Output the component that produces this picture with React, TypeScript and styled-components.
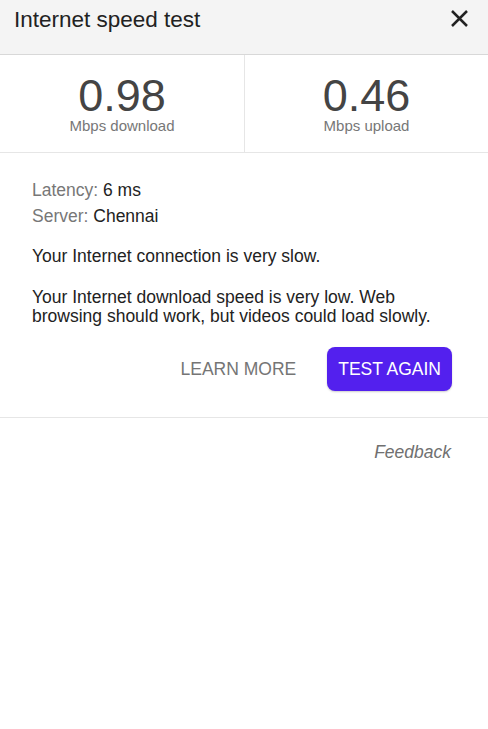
import React from "react";
import styled, { createGlobalStyle } from "styled-components";

const GlobalStyle = createGlobalStyle`
  html, body {
    margin: 0;
    padding: 0;
    background: #fff;
    font-family: "Liberation Sans", Arial, sans-serif;
  }
`;

const Panel = styled.div`
  width: 488px;
  min-height: 729px;
  background: #fff;
`;

const Header = styled.div`
  display: flex;
  align-items: flex-start;
  justify-content: space-between;
  height: 55px;
  padding: 0 19px 0 14px;
  background: #f4f4f4;
  border-bottom: 1px solid #d8d8d8;
  box-sizing: border-box;
`;

const Title = styled.h1`
  margin: 0;
  padding-top: 7px;
  font-size: 22.5px;
  font-weight: normal;
  color: #222;
  line-height: 26px;
`;

const CloseButton = styled.button`
  border: none;
  background: none;
  padding: 0;
  margin-top: 9px;
  width: 19px;
  height: 19px;
  cursor: pointer;
`;

const Stats = styled.div`
  display: grid;
  grid-template-columns: 245px 1fr;
  border-bottom: 1px solid #e6e6e6;
`;

const Stat = styled.div<{ $divider?: boolean }>`
  display: flex;
  flex-direction: column;
  align-items: center;
  height: 97px;
  padding-top: 20px;
  box-sizing: border-box;
  border-right: ${(p) => (p.$divider ? "1px solid #e6e6e6" : "none")};
`;

const Value = styled.div`
  font-size: 45px;
  line-height: 42px;
  color: #444;
`;

const Unit = styled.div`
  font-size: 15px;
  line-height: 17px;
  color: #777;
`;

const Body = styled.div`
  padding: 24px 36px 26px 32px;
  border-bottom: 1px solid #e6e6e6;
`;

const Meta = styled.div`
  font-size: 17.5px;
  line-height: 26px;
  color: #222;
`;

const MetaLabel = styled.span`
  color: #777;
`;

const Message = styled.p<{ $space: number }>`
  margin: ${(p) => p.$space}px 0 0;
  font-size: 17.5px;
  line-height: 19px;
  color: #222;
`;

const Actions = styled.div`
  display: flex;
  justify-content: flex-end;
  align-items: center;
  gap: 31px;
  margin-top: 21px;
`;

const TextButton = styled.button`
  border: none;
  background: none;
  padding: 0;
  font-family: inherit;
  font-size: 17.5px;
  color: #757575;
  cursor: pointer;
`;

const PrimaryButton = styled.button`
  border: none;
  background: #5320ee;
  color: #fff;
  font-family: inherit;
  font-size: 17.5px;
  height: 44px;
  padding: 0 11px;
  border-radius: 8px;
  box-shadow: 0 1px 2px rgba(0, 0, 0, 0.2);
  cursor: pointer;
`;

const Footer = styled.div`
  display: flex;
  justify-content: flex-end;
  padding: 24px 37px 0 0;
`;

const FeedbackLink = styled.a`
  font-size: 17.5px;
  line-height: 20px;
  font-style: italic;
  color: #707070;
  text-decoration: none;
  cursor: pointer;
`;

const CloseIcon = () => (
  <svg width="19" height="19" viewBox="0 0 19 19">
    <path d="M2 2 L17 17 M17 2 L2 17" stroke="#222" strokeWidth="2.5" />
  </svg>
);

export default function App() {
  return (
    <>
      <GlobalStyle />
      <Panel>
        <Header>
          <Title>Internet speed test</Title>
          <CloseButton aria-label="Close">
            <CloseIcon />
          </CloseButton>
        </Header>
        <Stats>
          <Stat $divider>
            <Value>0.98</Value>
            <Unit>Mbps download</Unit>
          </Stat>
          <Stat>
            <Value>0.46</Value>
            <Unit>Mbps upload</Unit>
          </Stat>
        </Stats>
        <Body>
          <Meta>
            <MetaLabel>Latency:</MetaLabel> 6 ms
          </Meta>
          <Meta>
            <MetaLabel>Server:</MetaLabel> Chennai
          </Meta>
          <Message $space={18}>Your Internet connection is very slow.</Message>
          <Message $space={22}>
            Your Internet download speed is very low. Web browsing should work,
            but videos could load slowly.
          </Message>
          <Actions>
            <TextButton>LEARN MORE</TextButton>
            <PrimaryButton>TEST AGAIN</PrimaryButton>
          </Actions>
        </Body>
        <Footer>
          <FeedbackLink>Feedback</FeedbackLink>
        </Footer>
      </Panel>
    </>
  );
}
